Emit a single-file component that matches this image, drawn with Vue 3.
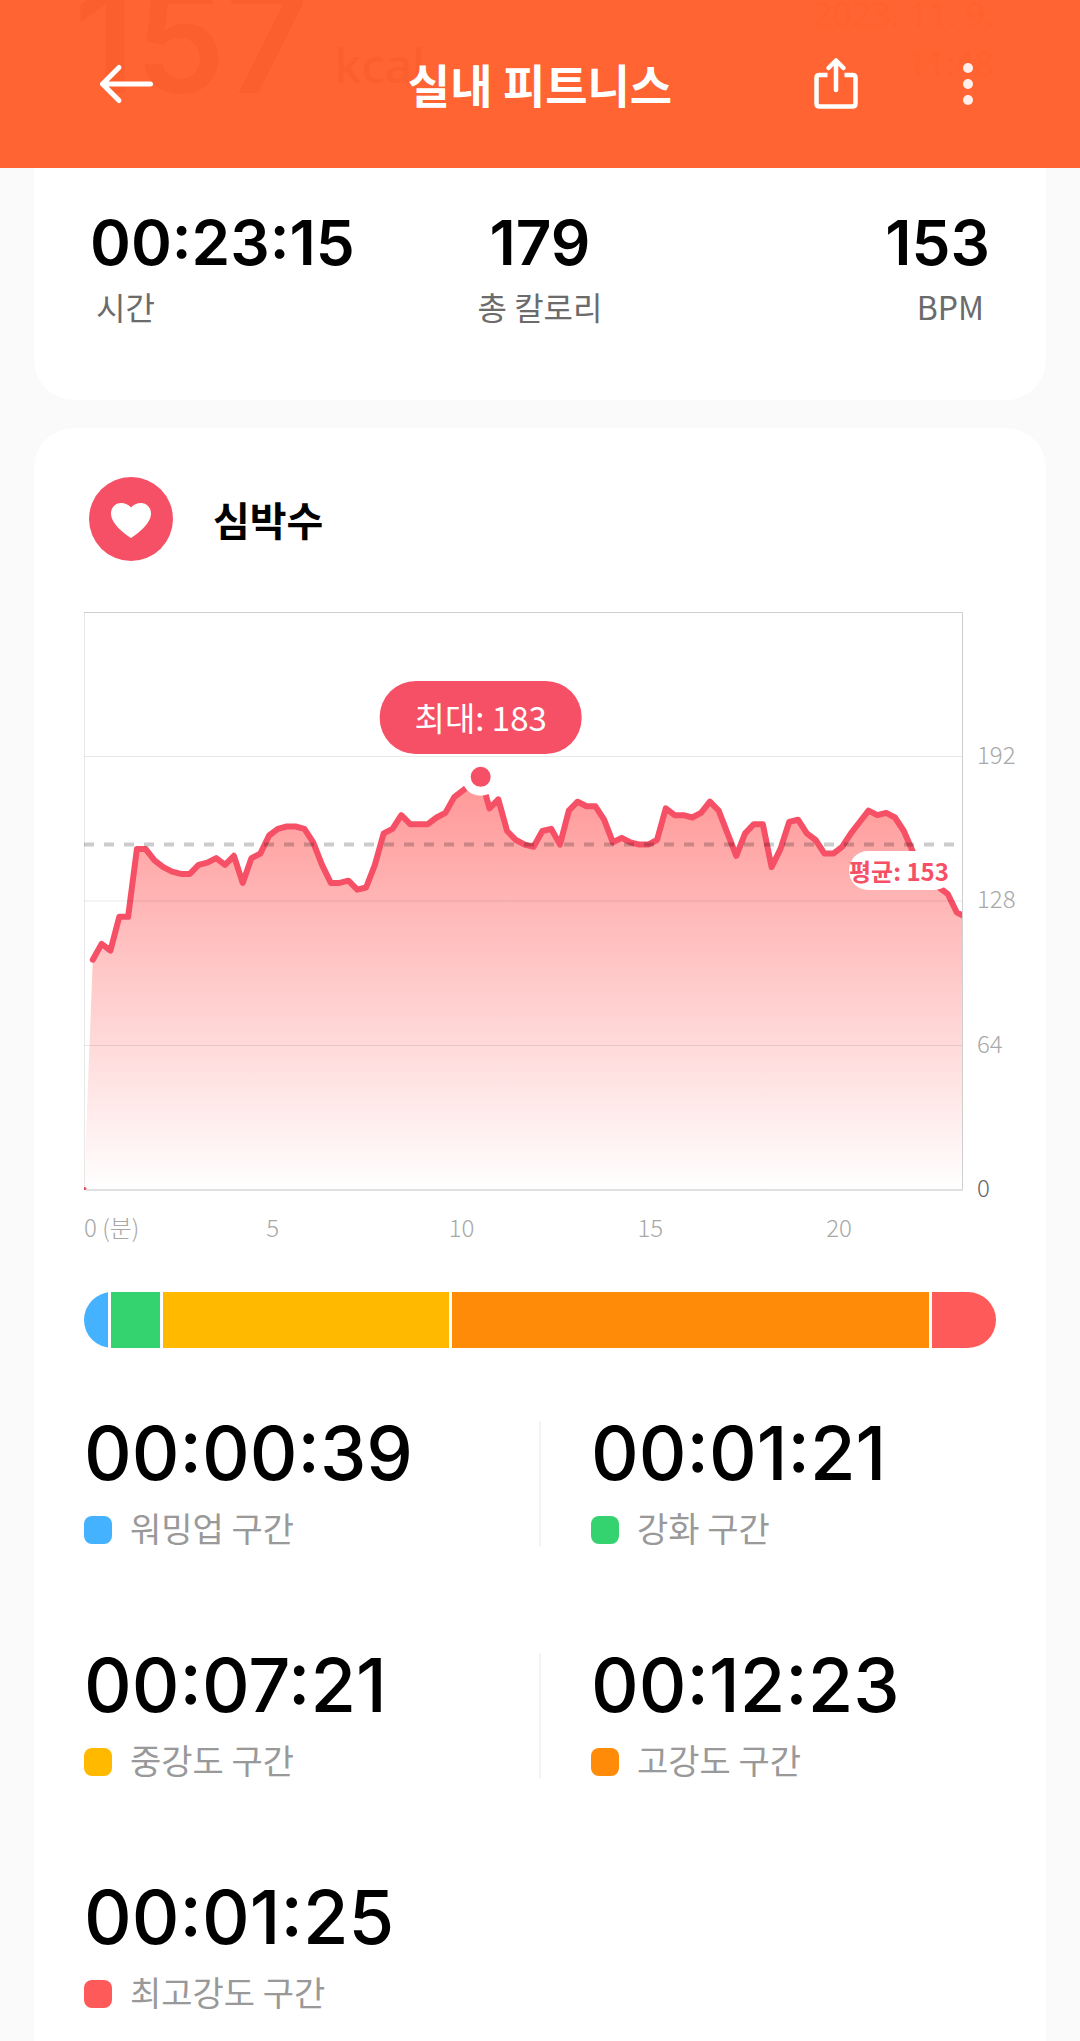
<script setup>
import { computed } from 'vue'

const summary = [
  { value: '00:23:15', label: '시간' },
  { value: '179', label: '총 칼로리' },
  { value: '153', label: 'BPM' },
]

const zones = [
  { key: 'warmup', time: '00:00:39', label: '워밍업 구간', share: 24 },
  { key: 'fitness', time: '00:01:21', label: '강화 구간', share: 49 },
  { key: 'moderate', time: '00:07:21', label: '중강도 구간', share: 286 },
  { key: 'high', time: '00:12:23', label: '고강도 구간', share: 477 },
  { key: 'extreme', time: '00:01:25', label: '최고강도 구간', share: 64 },
]

// one sample every 14 seconds, the first one is the sensor starting from zero
const samples = [
  0, 102, 109, 106, 121, 121, 151, 151, 146, 143, 141, 140, 140, 144, 145, 147, 144, 148, 136, 147,
  149, 157, 160, 161, 161, 160, 154, 144, 136, 136, 137, 133, 134, 144, 158, 160, 166, 162, 162, 162,
  165, 167, 174, 177, 180, 183, 169, 173, 159, 155, 153, 152, 159, 160, 153, 168, 172, 170, 170, 164,
  154, 156, 154, 153, 153, 155, 169, 166, 166, 165, 167, 172, 168, 158, 148, 158, 162, 162, 143, 151,
  163, 164, 158, 155, 149, 149, 152, 158, 163, 168, 166, 167, 165, 159, 150, 143, 138, 134, 131, 123,
  121,
]

const PLOT_W = 879
const PLOT_H = 578
const STEP = 8.815
const MAX_BPM = 256

const px = (i) => i * STEP
const py = (bpm) => PLOT_H - (bpm / MAX_BPM) * PLOT_H

const yTicks = [192, 128, 64, 0].map((v) => ({ value: v, y: py(v) }))
const xTicks = [5, 10, 15, 20].map((m) => ({ value: m, x: m * 37.75 }))

const points = computed(() => samples.map((v, i) => `${px(i).toFixed(1)},${py(v).toFixed(1)}`))
const linePath = computed(() => 'M' + points.value.slice(1).join(' L'))
const areaPath = computed(() => `M${points.value.join(' L')} V${PLOT_H} Z`)

const peak = Math.max(...samples)
const peakX = px(samples.indexOf(peak))
const peakY = py(peak)
const avgY = py(153)
</script>

<template>
  <div class="page">
    <header class="topbar">
      <div class="behind" aria-hidden="true">
        <div class="behind-kcal"><span class="behind-num">157</span><span class="behind-unit">kcal</span></div>
        <div class="behind-date"><span>2023. 11. 9.</span><span>11:48</span></div>
      </div>
      <button class="icon-btn back" type="button" aria-label="뒤로">
        <svg width="56" height="44" viewBox="0 0 56 44" fill="none" stroke="currentColor" stroke-width="5" stroke-linecap="round" stroke-linejoin="round">
          <path d="M21 5.500L4.500 22L21 38.500M4.500 22H52.500" />
        </svg>
      </button>
      <h1 class="title">실내 피트니스</h1>
      <div class="actions">
        <button class="icon-btn" type="button" aria-label="공유">
          <svg width="48" height="56" viewBox="0 0 48 56" fill="none" stroke="currentColor" stroke-width="4.500" stroke-linecap="round" stroke-linejoin="round">
            <path d="M24 34V5M16.500 12L24 4.500L31.500 12" />
            <path d="M15.500 19H7.500Q4.500 19 4.500 22V47.500Q4.500 50.500 7.500 50.500H40.500Q43.500 50.500 43.500 47.500V22Q43.500 19 40.500 19H32.500" stroke-linecap="butt" />
          </svg>
        </button>
        <button class="icon-btn" type="button" aria-label="더보기">
          <svg class="dots" width="12" height="44" viewBox="0 0 12 44" fill="currentColor">
            <circle cx="6" cy="6" r="5" />
            <circle cx="6" cy="22" r="5" />
            <circle cx="6" cy="38" r="5" />
          </svg>
        </button>
      </div>
    </header>

    <section class="card summary">
      <div v-for="s in summary" :key="s.label" class="stat">
        <div class="stat-value">{{ s.value }}</div>
        <div class="stat-label">{{ s.label }}</div>
      </div>
    </section>

    <section class="card heart">
      <div class="heart-head">
        <svg class="heart-icon" width="84" height="84" viewBox="0 0 84 84">
          <circle cx="42" cy="42" r="42" fill="#f65066" />
          <path d="M42 61C36 57 22 47 22 36.500C22 30.500 26.500 26 32 26C36 26 39.500 27.500 42 30.500C44.500 27.500 48 26 52 26C57.500 26 62 30.500 62 36.500C62 47 48 57 42 61Z" fill="#fff" />
        </svg>
        <h2 class="heart-title">심박수</h2>
      </div>

      <svg class="chart" viewBox="0 0 936 640" role="img" aria-label="심박수 그래프">
        <defs>
          <linearGradient id="hr-fill" gradientUnits="userSpaceOnUse" x1="0" :y1="peakY" x2="0" :y2="PLOT_H">
            <stop offset="0" stop-color="#ff9696" />
            <stop offset="1" stop-color="#ffffff" />
          </linearGradient>
          <clipPath id="hr-clip">
            <rect x="0" y="0" :width="PLOT_W" :height="PLOT_H" />
          </clipPath>
        </defs>

        <g clip-path="url(#hr-clip)">
          <path :d="areaPath" fill="url(#hr-fill)" />
          <path :d="linePath" class="hr-line" />
          <circle cx="0" :cy="PLOT_H" r="3" fill="#f65066" />
        </g>

        <line v-for="t in yTicks.slice(0, 3)" :key="t.value" class="grid" x1="0" :x2="PLOT_W" :y1="t.y" :y2="t.y" />
        <line class="grid" x1="0.500" x2="0.500" y1="0" :y2="PLOT_H" />
        <path :d="`M0 0.500H${PLOT_W - 0.5}V${PLOT_H}`" class="frame" />
        <line class="base" x1="2" :x2="PLOT_W" :y1="PLOT_H" :y2="PLOT_H" />
        <line class="avg-line" x1="0" x2="872" :y1="avgY" :y2="avgY" />

        <rect x="765" y="239" width="104" height="39" rx="19" fill="#fff" />
        <text x="765" y="269" class="avg-text">평균: 153</text>

        <circle :cx="peakX" :cy="peakY" r="19" fill="#fff" />
        <circle :cx="peakX" :cy="peakY" r="10" fill="#f65066" />
        <rect :x="peakX - 101" y="69" width="202" height="73" rx="36" fill="#f65066" />
        <text :x="peakX" y="119" class="max-text">최대: {{ peak }}</text>

        <text v-for="t in yTicks" :key="'y' + t.value" x="893" :y="t.y + 7" class="axis" :class="{ zero: t.value === 0 }">{{ t.value }}</text>
        <text x="0" y="625" class="axis">0 (분)</text>
        <text v-for="t in xTicks" :key="'x' + t.value" :x="t.x" y="625" class="axis mid">{{ t.value }}</text>
      </svg>

      <div class="zone-bar">
        <div v-for="z in zones" :key="z.key" :class="z.key" :style="{ flexGrow: z.share }"></div>
      </div>

      <div class="zones">
        <div v-for="z in zones" :key="z.key" class="zone">
          <div class="zone-time">{{ z.time }}</div>
          <div class="zone-label"><i class="swatch" :class="z.key"></i><span>{{ z.label }}</span></div>
        </div>
      </div>
    </section>
  </div>
</template>

<style>
body {
  margin: 0;
  background: #fafafa;
}
</style>

<style scoped>
.page {
  min-height: 100vh;
  display: flex;
  flex-direction: column;
  background: #fafafa;
  color: #000;
  font-family: "Noto Sans CJK KR", sans-serif;
}

.topbar {
  position: relative;
  overflow: hidden;
  height: 168px;
  box-sizing: border-box;
  padding: 0 106px;
  display: grid;
  grid-template-columns: 1fr auto 1fr;
  align-items: center;
  background: #ff6432;
  color: #fff;
}
.behind {
  position: absolute;
  inset: 0;
  color: #fb5f2e;
  font-family: Inter, sans-serif;
}
.behind-kcal {
  position: absolute;
  left: 74px;
  bottom: 55px;
  display: flex;
  align-items: flex-end;
  gap: 26px;
}
.behind-num {
  font-size: 144px;
  line-height: 144px;
  font-weight: 600;
}
.behind-unit {
  font-family: "Noto Sans", sans-serif;
  font-size: 48px;
  line-height: 96px;
  font-weight: 500;
}
.behind-date {
  position: absolute;
  top: -10px;
  right: 86px;
  display: flex;
  flex-direction: column;
  align-items: flex-end;
  font-family: "Noto Sans", sans-serif;
  font-size: 34px;
  line-height: 49px;
  color: #ff612f;
}
.icon-btn {
  position: relative;
  display: flex;
  padding: 0;
  border: 0;
  background: none;
  color: inherit;
}
.back {
  justify-self: start;
  margin-left: -8px;
}
.title {
  position: relative;
  margin: 0;
  padding-bottom: 2px;
  font-size: 46px;
  line-height: 64px;
  font-weight: 700;
}
.actions {
  display: flex;
  justify-content: flex-end;
  align-items: center;
  gap: 102px;
}
.dots {
  opacity: 0.9;
}

.card {
  margin: 0 34px;
  background: #fff;
}
.summary {
  display: grid;
  grid-template-columns: 1fr 1fr 1fr;
  padding: 39px 56px 70px;
  border-radius: 0 0 40px 40px;
}
.stat:nth-child(2) {
  text-align: center;
}
.stat:nth-child(3) {
  text-align: right;
}
.stat-value {
  font-family: Inter, sans-serif;
  font-size: 62px;
  line-height: 72px;
  font-weight: 600;
}
.stat-label {
  padding: 3px 6px 0;
  font-size: 32px;
  line-height: 48px;
  color: #6b6b6b;
}

.heart {
  flex: 1;
  margin-top: 28px;
  padding: 49px 50px 31px;
  border-radius: 40px 40px 0 0;
}
.heart-head {
  display: flex;
  align-items: center;
  gap: 40px;
  padding-left: 5px;
}
.heart-title {
  margin: 0;
  font-size: 40px;
  line-height: 56px;
  font-weight: 700;
}

.chart {
  display: block;
  width: calc(100% + 24px);
  margin-top: 51px;
}
.hr-line {
  fill: none;
  stroke: #f65066;
  stroke-width: 6;
  stroke-linecap: round;
  stroke-linejoin: round;
}
.grid {
  stroke: rgba(0, 0, 0, 0.09);
}
.frame {
  fill: none;
  stroke: #cfcfcf;
}
.base {
  stroke: #dfe1e1;
  stroke-width: 2;
}
.avg-line {
  stroke: rgba(0, 0, 0, 0.2);
  stroke-width: 4;
  stroke-dasharray: 10 10;
}
.avg-text {
  font-size: 24px;
  font-weight: 700;
  fill: #f65066;
}
.max-text {
  font-size: 33px;
  fill: #fff;
  text-anchor: middle;
}
.axis {
  font-size: 24px;
  font-weight: 300;
  fill: #a8a8a8;
}
.zero {
  fill: #666;
}
.mid {
  text-anchor: middle;
}

.zone-bar {
  display: flex;
  gap: 3px;
  height: 56px;
  margin-top: 40px;
  border-radius: 28px;
  overflow: hidden;
}
.warmup {
  background: #45b2ff;
}
.fitness {
  background: #35d370;
}
.moderate {
  background: #ffba00;
}
.high {
  background: #ff8b08;
}
.extreme {
  background: #ff5a5a;
}

.zones {
  display: grid;
  grid-template-columns: 1fr 1fr;
  row-gap: 107px;
  margin-top: 73px;
}
.zone {
  height: 125px;
}
.zone:nth-child(even) {
  margin-left: -1px;
  padding-left: 50px;
  border-left: 2px solid #f3f3f3;
}
.zone-time {
  font-family: Inter, sans-serif;
  font-size: 74px;
  line-height: 64px;
  font-weight: 500;
}
.zone-label {
  display: flex;
  align-items: center;
  gap: 18px;
  margin-top: 19px;
  font-size: 34px;
  line-height: 48px;
  color: #999;
}
.zone-label span {
  padding-bottom: 4px;
}
.swatch {
  width: 28px;
  height: 28px;
  border-radius: 8px;
}
</style>
